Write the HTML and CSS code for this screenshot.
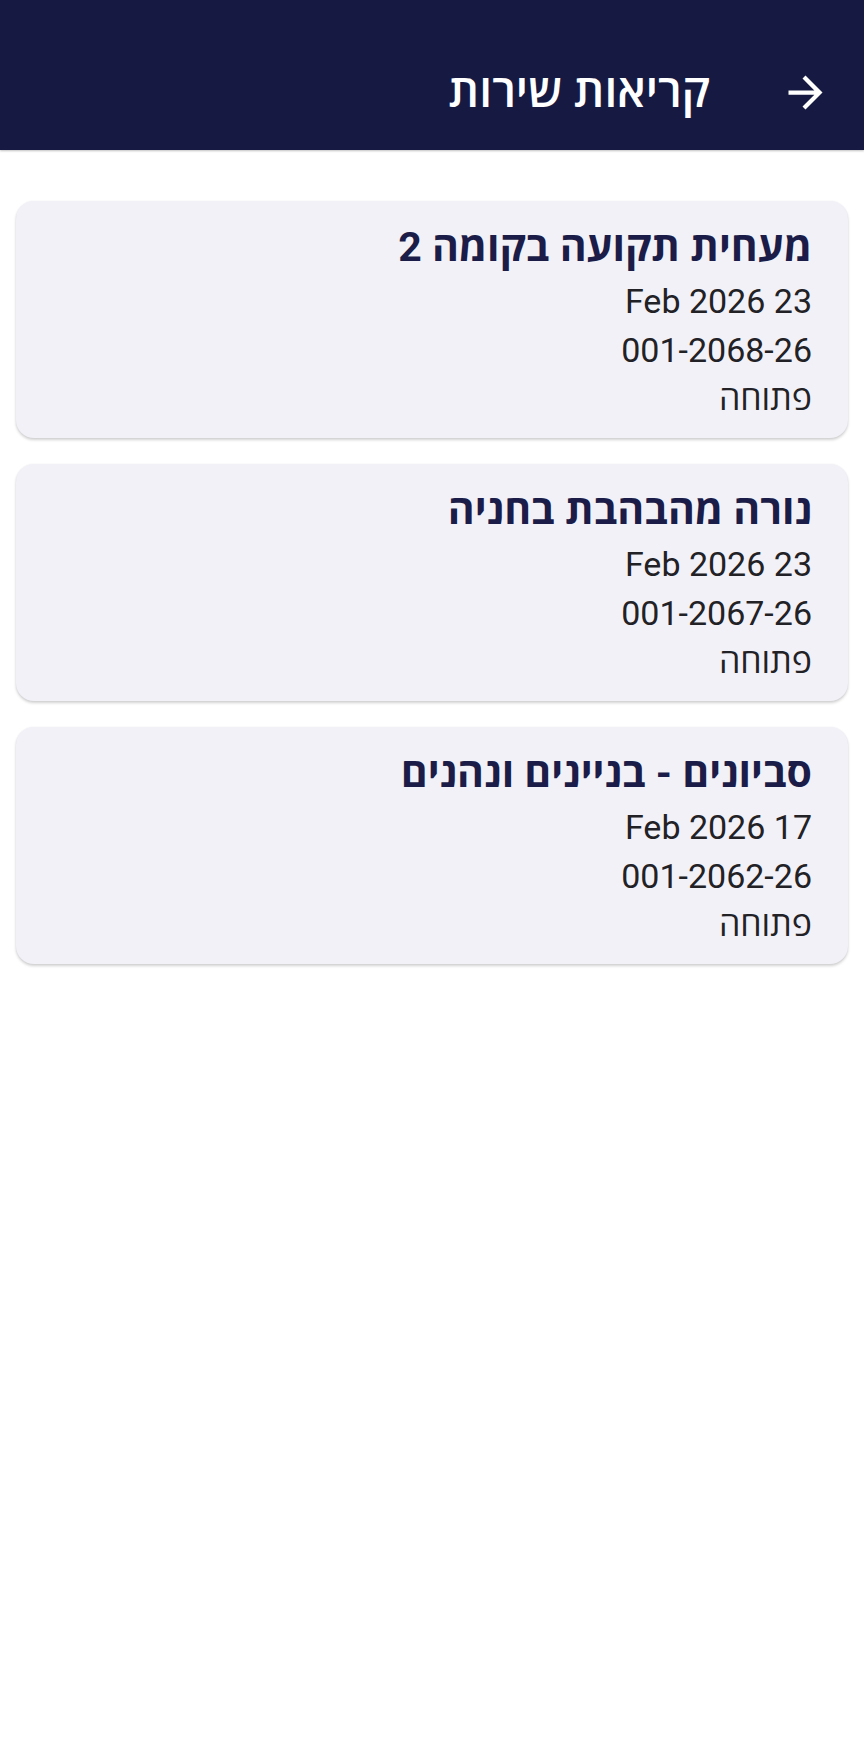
FILE: index.html
```html
<!DOCTYPE html>
<html lang="he" dir="rtl">
<head>
<meta charset="utf-8">
<title>קריאות שירות</title>
<link rel="stylesheet" href="styles.css">
</head>
<body>
<header class="appbar">
  <button class="back" aria-label="חזרה">
    <svg viewBox="0 0 24 24" width="51" height="51"><path d="M12 4l-1.41 1.41L16.17 11H4v2h12.17l-5.58 5.59L12 20l8-8z" fill="#ffffff"/></svg>
  </button>
  <h1 class="appbar-title">קריאות שירות</h1>
</header>
<main class="list">
  <article class="card">
    <h2 class="card-title">מעחית תקועה בקומה 2</h2>
    <div class="line">23 Feb 2026</div>
    <div class="line">001-2068-26</div>
    <div class="line">פתוחה</div>
  </article>
  <article class="card">
    <h2 class="card-title">נורה מהבהבת בחניה</h2>
    <div class="line">23 Feb 2026</div>
    <div class="line">001-2067-26</div>
    <div class="line">פתוחה</div>
  </article>
  <article class="card">
    <h2 class="card-title">סביונים - בניינים ונהנים</h2>
    <div class="line">17 Feb 2026</div>
    <div class="line">001-2062-26</div>
    <div class="line">פתוחה</div>
  </article>
</main>
</body>
</html>
```
FILE: styles.css
```css
html, body {
  margin: 0;
  padding: 0;
  background: #ffffff;
}
body {
  font-family: Roboto, "Open Sans", "Noto Sans", sans-serif;
  width: 864px;
  min-height: 1748px;
}
.appbar {
  height: 150px;
  background: #161a43;
  display: flex;
  align-items: center;
  padding: 34px 33px 0 0;
  box-sizing: border-box;
  gap: 70px;
  box-shadow: 0 1px 2px rgba(0,0,0,0.25);
}
.back {
  background: none;
  border: 0;
  padding: 0;
  width: 51px;
  height: 51px;
  display: flex;
  align-items: center;
  justify-content: center;
  cursor: pointer;
}
.back svg { display: block; }
.appbar-title {
  margin: 0;
  color: #ffffff;
  font-size: 46px;
  font-weight: 600;
  line-height: 1.2;
}
.list {
  padding: 51px 16px 0 16px;
  display: flex;
  flex-direction: column;
  gap: 26px;
}
.card {
  background: #f3f1f8;
  border-radius: 18px;
  padding: 25px 36px 14px 36px;
  box-shadow: 0 2px 3px rgba(0,0,0,0.18), 0 0 2px rgba(0,0,0,0.06);
  height: 237px;
  box-sizing: border-box;
}
.card-title {
  margin: 0 0 8px 0;
  font-size: 41px;
  font-weight: 700;
  line-height: 43px;
  color: #1b1d48;
}
.line {
  font-size: 34px;
  line-height: 48.5px;
  color: #222226;
}
```
